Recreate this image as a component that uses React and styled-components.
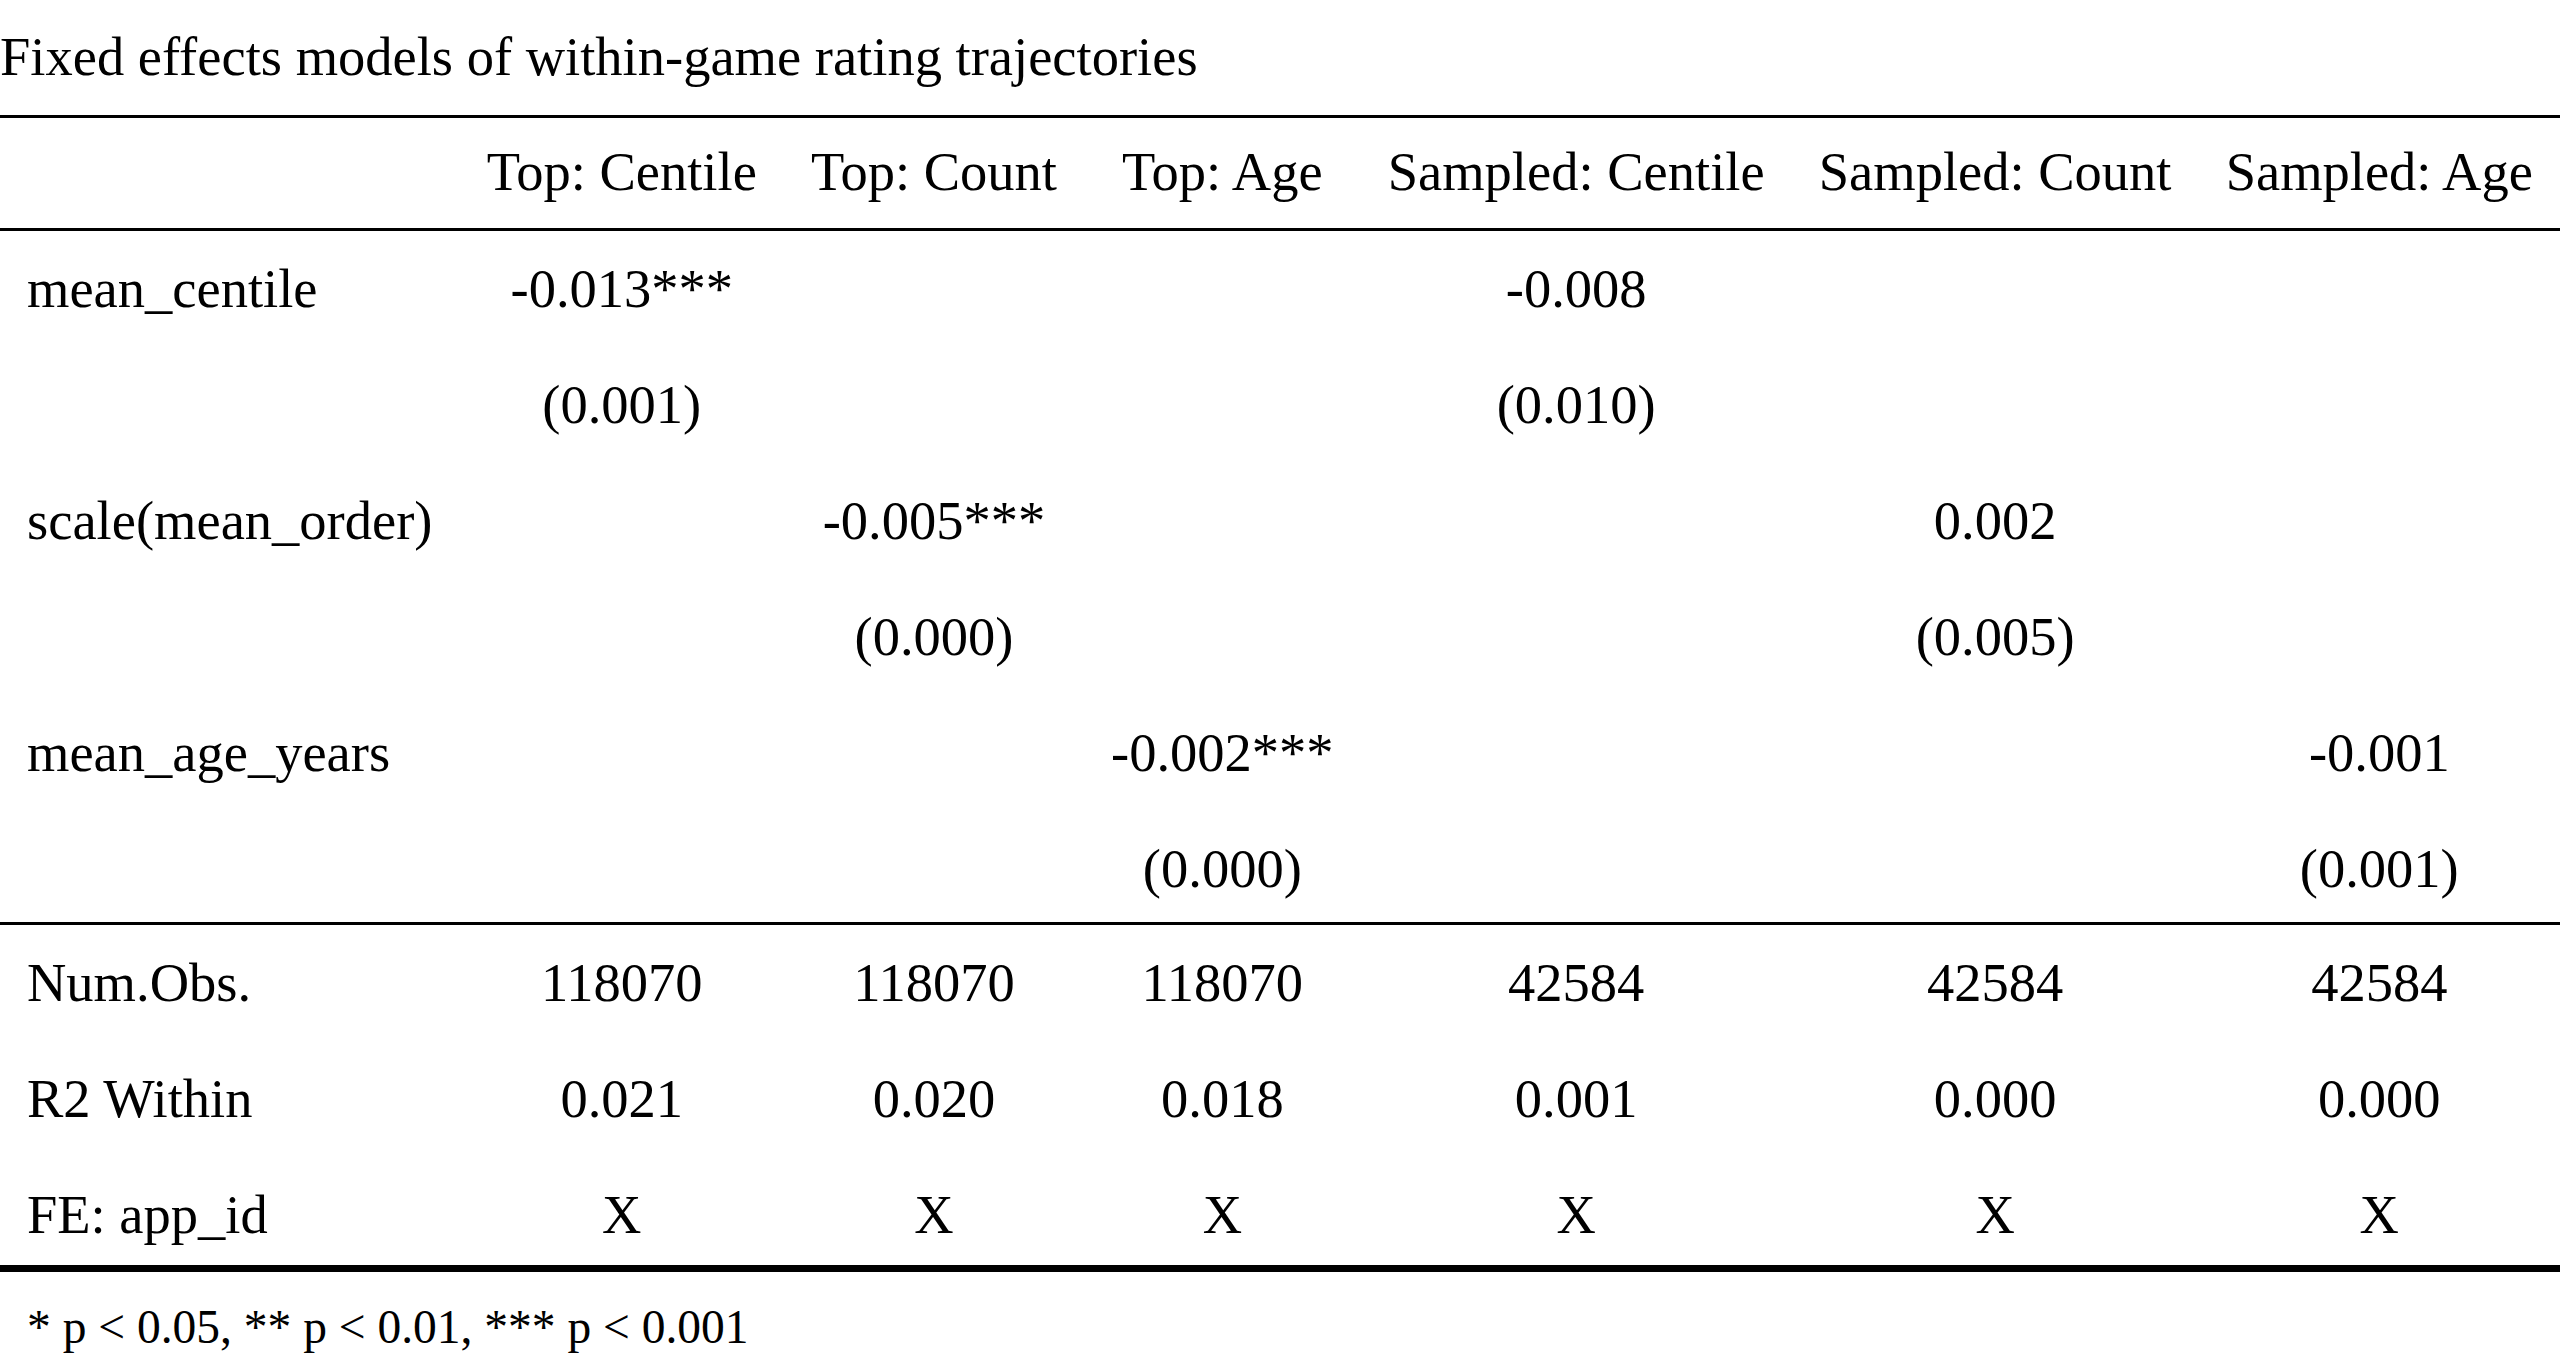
import React from "react"
import styled, { createGlobalStyle } from "styled-components"

const models = [
  "Top: Centile",
  "Top: Count",
  "Top: Age",
  "Sampled: Centile",
  "Sampled: Count",
  "Sampled: Age",
]

const estimates = [
  ["mean_centile", "-0.013***", "", "", "-0.008", "", ""],
  ["", "(0.001)", "", "", "(0.010)", "", ""],
  ["scale(mean_order)", "", "-0.005***", "", "", "0.002", ""],
  ["", "", "(0.000)", "", "", "(0.005)", ""],
  ["mean_age_years", "", "", "-0.002***", "", "", "-0.001"],
  ["", "", "", "(0.000)", "", "", "(0.001)"],
]

const goodness = [
  ["Num.Obs.", "118070", "118070", "118070", "42584", "42584", "42584"],
  ["R2 Within", "0.021", "0.020", "0.018", "0.001", "0.000", "0.000"],
  ["FE: app_id", "X", "X", "X", "X", "X", "X"],
]

// the last row of each block sits a little closer to the rule under it
const section = (rows, rule, tail) =>
  rows.map((row, i) => {
    const last = i === rows.length - 1
    return (
      <Row key={i + row.join("|")} $rule={last ? rule : null}>
        {row.map((v, j) => (
          <Cell key={j} $left={j === 0} $bottom={last ? tail : 27}>{v}</Cell>
        ))}
      </Row>
    )
  })

const App = () => {
  return (
    <>
      <GlobalStyle />
      <Table>
        <Caption>Fixed effects models of within-game rating trajectories</Caption>
        <thead>
          <HeadRow>
            <HeadCell />
            {models.map((m) => (
              <HeadCell key={m}>{m}</HeadCell>
            ))}
          </HeadRow>
        </thead>
        <tbody>
          {section(estimates, "3px", 22)}
          {section(goodness, "7px", 19)}
        </tbody>
        <tfoot>
          <tr>
            <Note colSpan={7}>* p &lt; 0.05, ** p &lt; 0.01, *** p &lt; 0.001</Note>
          </tr>
        </tfoot>
      </Table>
    </>
  )
}

const GlobalStyle = createGlobalStyle`
  html, body {
    margin: 0;
    background: #ffffff;
  }
  body {
    font-family: "Liberation Serif", "Times New Roman", serif;
    color: #000000;
  }
`

const Table = styled.table`
  width: 100%;
  border-collapse: collapse;
  font-size: 54.5px;
  line-height: 62px;
`

const Caption = styled.caption`
  caption-side: top;
  text-align: left;
  padding: 26px 0 27px 0;
  white-space: nowrap;
`

const HeadRow = styled.tr`
  border-top: 3px solid #000;
  border-bottom: 3px solid #000;
`

const HeadCell = styled.th`
  font-weight: normal;
  text-align: center;
  white-space: nowrap;
  padding: 23px 27px 25px 27px;
`

const Row = styled.tr`
  border-bottom: ${(props) => (props.$rule ? `${props.$rule} solid #000` : "none")};
`

const Cell = styled.td`
  text-align: ${(props) => (props.$left ? "left" : "center")};
  white-space: nowrap;
  padding: 27px 27px ${(props) => props.$bottom}px 27px;
  height: 62px;
`

const Note = styled.td`
  text-align: left;
  font-size: 47.5px;
  line-height: 55px;
  padding: 28px 27px 14px 27px;
`

export default App
